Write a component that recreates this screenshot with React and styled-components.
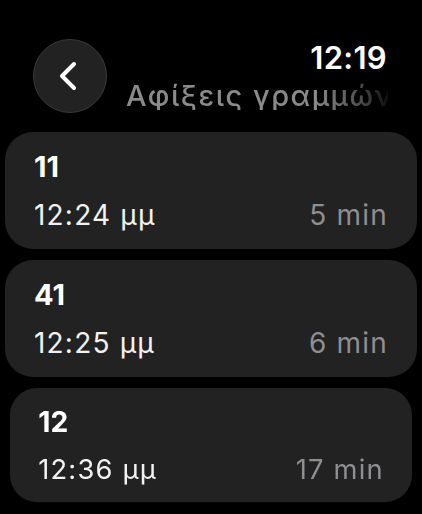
import React from "react";
import styled, { createGlobalStyle } from "styled-components";

const GlobalStyle = createGlobalStyle`
  html, body {
    margin: 0;
    padding: 0;
    background: #000;
  }
  body {
    font-family: Inter, "Noto Sans", "DejaVu Sans", sans-serif;
    color: #fff;
    -webkit-font-smoothing: antialiased;
  }
`;

const arrivals = [
  { line: "11", time: "12:24 μμ", wait: "5 min" },
  { line: "41", time: "12:25 μμ", wait: "6 min" },
  { line: "12", time: "12:36 μμ", wait: "17 min", scale: 0.976 },
];

const Screen = styled.div`
  width: 422px;
  height: 514px;
  overflow: hidden;
  background: #000;
`;

const Header = styled.div`
  display: flex;
  align-items: flex-start;
  padding: 39px 34px 0 33px;
  gap: 19px;
`;

const BackButton = styled.button`
  flex: none;
  width: 74px;
  height: 74px;
  border-radius: 50%;
  background: #222222;
  border: 1.5px solid #3a3a3a;
  box-sizing: border-box;
  display: flex;
  align-items: center;
  justify-content: center;
  padding: 0 4px 0 0;
  cursor: pointer;
`;

const HeaderText = styled.div`
  flex: 1;
  min-width: 0;
  display: flex;
  flex-direction: column;
  margin-top: 3px;
`;

const Clock = styled.div`
  align-self: flex-end;
  font-size: 31px;
  line-height: 31px;
  font-weight: 600;
  letter-spacing: 0.3px;
  color: #fff;
  margin-right: 1px;
`;

const Title = styled.div`
  margin-top: 8px;
  font-size: 29px;
  line-height: 29px;
  font-weight: 500;
  letter-spacing: 1.5px;
  color: #8a8a8a;
  white-space: nowrap;
  overflow: hidden;
  -webkit-mask-image: linear-gradient(to right, #000 72%, rgba(0, 0, 0, 0.55) 90%, rgba(0, 0, 0, 0.1) 100%);
  mask-image: linear-gradient(to right, #000 72%, rgba(0, 0, 0, 0.55) 90%, rgba(0, 0, 0, 0.1) 100%);
`;

const List = styled.div`
  display: flex;
  flex-direction: column;
  gap: 11px;
  padding: 19px 5px 0;
`;

const Card = styled.div`
  height: 117px;
  box-sizing: border-box;
  background: #222222;
  border-radius: 28px;
  padding: 18px 30px 17px 29px;
  display: flex;
  flex-direction: column;
  gap: 14px;
  transform: scale(${(p) => p.$scale || 1});
  transform-origin: center top;
`;

const LineNo = styled.div`
  font-size: 29px;
  line-height: 34px;
  font-weight: 700;
  color: #fff;
`;

const Row = styled.div`
  display: flex;
  justify-content: space-between;
  align-items: baseline;
  font-size: 28px;
  line-height: 34px;
  letter-spacing: 1.2px;
`;

const Time = styled.span`
  color: #f2f2f2;
`;

const Wait = styled.span`
  color: #8e8e93;
  margin-right: -1px;
`;

const Chevron = () => (
  <svg width="22" height="32" viewBox="0 0 22 32" fill="none">
    <polyline
      points="17,4 5,16 17,28"
      stroke="#fff"
      strokeWidth="4"
      strokeLinecap="round"
      strokeLinejoin="round"
    />
  </svg>
);

export default function App() {
  return (
    <Screen>
      <GlobalStyle />
      <Header>
        <BackButton aria-label="Πίσω">
          <Chevron />
        </BackButton>
        <HeaderText>
          <Clock>12:19</Clock>
          <Title>Αφίξεις γραμμών</Title>
        </HeaderText>
      </Header>
      <List>
        {arrivals.map((item) => (
          <Card key={item.line} $scale={item.scale}>
            <LineNo>{item.line}</LineNo>
            <Row>
              <Time>{item.time}</Time>
              <Wait>{item.wait}</Wait>
            </Row>
          </Card>
        ))}
      </List>
    </Screen>
  );
}
